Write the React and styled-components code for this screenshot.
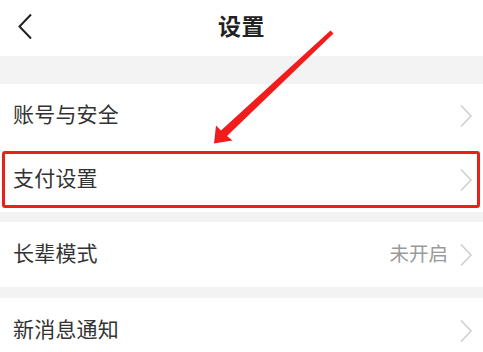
import React from "react";
import styled, { createGlobalStyle } from "styled-components";

const GlobalStyle = createGlobalStyle`
  html, body {
    margin: 0;
    padding: 0;
    background: #ffffff;
    overflow: hidden;
  }
  body {
    font-family: "Noto Sans CJK SC", "Noto Sans", sans-serif;
  }
`;

const items = [
  { group: 1, label: "账号与安全", height: 63 },
  { group: 1, label: "支付设置", height: 65, marked: true },
  { group: 2, label: "长辈模式", height: 65, value: "未开启" },
  { group: 3, label: "新消息通知", height: 65 },
];

function App() {
  const groups = [1, 2, 3].map((g) => items.filter((i) => i.group === g));

  return (
    <Screen>
      <GlobalStyle />
      <Header>
        <BackButton>
          <svg width="16" height="27" viewBox="0 0 16 27">
            <polyline
              points="14,1.5 2.5,13.5 14,25.5"
              fill="none"
              stroke="#222"
              strokeWidth="2"
            />
          </svg>
        </BackButton>
        <Title>设置</Title>
      </Header>

      <Gap size={28} />
      {groups.map((group, gi) => (
        <React.Fragment key={gi}>
          {gi > 0 && <Gap size={gi === 1 ? 10 : 11} />}
          <Group>
            {group.map((item) => (
              <Row key={item.label} height={item.height}>
                <Label>{item.label}</Label>
                <Trailing>
                  {item.value && <Value>{item.value}</Value>}
                  <Chevron />
                </Trailing>
                {item.marked && <Highlight />}
              </Row>
            ))}
          </Group>
        </React.Fragment>
      ))}

      <Arrow width="483" height="352" viewBox="0 0 483 352">
        <polygon
          points="330.5,30.5 333.5,33.5 227,136 232.5,140.5 214,143.5 216,125.5 221,130.5"
          fill="#f21c1c"
        />
      </Arrow>
    </Screen>
  );
}

function Chevron() {
  return (
    <svg width="14" height="24" viewBox="0 0 14 24">
      <polyline
        points="2,1.5 12,12 2,22.5"
        fill="none"
        stroke="#cfcfcf"
        strokeWidth="1.6"
      />
    </svg>
  );
}

export default App;

const Screen = styled.div`
  position: relative;
  width: 483px;
  height: 352px;
  overflow: hidden;
  background: #ffffff;
`;

const Header = styled.div`
  position: relative;
  height: 56px;
  display: flex;
  align-items: center;
  justify-content: center;
  background: #ffffff;
`;

const BackButton = styled.div`
  position: absolute;
  left: 17px;
  top: 13px;
  display: flex;
`;

const Title = styled.h1`
  margin: 0 0 6px;
  font-size: 23px;
  line-height: 1;
  font-weight: 700;
  color: #222222;
  letter-spacing: 0.5px;
`;

const Gap = styled.div`
  height: ${(p) => p.size}px;
  background: #f3f3f3;
`;

const Group = styled.div`
  background: #ffffff;
`;

const Row = styled.div`
  position: relative;
  height: ${(p) => p.height}px;
  display: flex;
  align-items: center;
  justify-content: space-between;
  padding: 0 10px 0 13px;
`;

const Label = styled.span`
  font-size: 21px;
  line-height: 1;
  padding-bottom: 4px;
  color: #333333;
  letter-spacing: 0.2px;
`;

const Trailing = styled.div`
  display: flex;
  align-items: center;
  gap: 11px;
`;

const Value = styled.span`
  font-size: 19.5px;
  line-height: 1;
  padding-bottom: 3px;
  color: #9a9a9a;
`;

const Highlight = styled.div`
  position: absolute;
  left: 2px;
  right: 3px;
  top: 4px;
  bottom: 4px;
  border: 3px solid #e8221b;
  border-radius: 3px;
  pointer-events: none;
`;

const Arrow = styled.svg`
  position: absolute;
  left: 0;
  top: 0;
  pointer-events: none;
`;
